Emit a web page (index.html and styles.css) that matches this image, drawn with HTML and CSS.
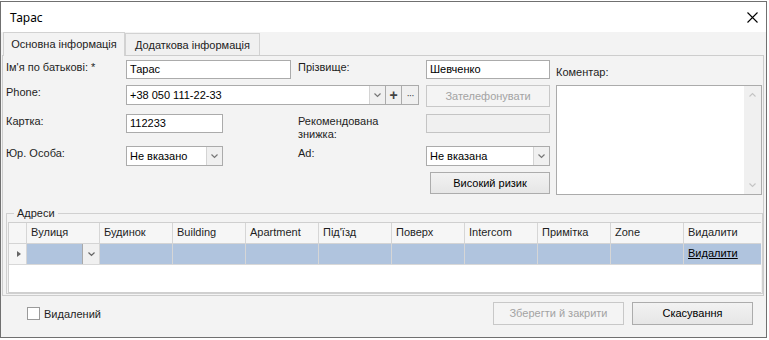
FILE: index.html
```html
<!DOCTYPE html>
<html lang="uk">
<head>
    <meta charset="UTF-8">
    <title>Тарас</title>
    <link rel="stylesheet" href="styles.css">
</head>
<body>
    <div class="dialog">
        <div class="titlebar">
            <span class="title">Тарас</span>
            <svg class="close" width="11" height="11" viewBox="0 0 11 11">
                <path d="M0.5 0.5 L10.5 10.5 M10.5 0.5 L0.5 10.5" stroke="#000" stroke-width="1.1" fill="none"/>
            </svg>
        </div>

        <div class="content">
            <div class="tabs">
                <div class="tab active">Основна інформація</div>
                <div class="tab">Додаткова інформація</div>
            </div>

            <div class="panel">
                <div class="form">
                    <label class="lbl">Ім'я по батькові: *</label>
                    <div class="input w165">Тарас</div>
                    <label class="lbl">Прізвище:</label>
                    <div class="input w124">Шевченко</div>
                    <div></div>
                    <label class="lbl comment-lbl">Коментар:</label>

                    <label class="lbl">Phone:</label>
                    <div class="phone">
                        <div class="combo w260">
                            <span class="combo-text">+38 050 111-22-33</span>
                            <span class="combo-btn"><svg width="7" height="5" viewBox="0 0 7 5"><path d="M0.5 0.5 L3.5 3.5 L6.5 0.5" stroke="#777" stroke-width="1.2" fill="none"/></svg></span>
                        </div>
                        <span class="mini-btn plus">+</span>
                        <span class="mini-btn dots">···</span>
                    </div>
                    <div class="btn disabled w124">Зателефонувати</div>
                    <div></div>
                    <div class="memo">
                        <div class="memo-text"></div>
                        <div class="scroll">
                            <svg width="7" height="5" viewBox="0 0 7 5"><path d="M0.5 4.5 L3.5 1.5 L6.5 4.5" stroke="#c4c4c4" stroke-width="1.1" fill="none"/></svg>
                            <svg width="7" height="5" viewBox="0 0 7 5"><path d="M0.5 0.5 L3.5 3.5 L6.5 0.5" stroke="#c4c4c4" stroke-width="1.1" fill="none"/></svg>
                        </div>
                    </div>

                    <label class="lbl">Картка:</label>
                    <div class="input w97">112233</div>
                    <label class="lbl">Рекомендована<br>знижка:</label>
                    <div class="input disabled w124"></div>
                    <div></div>

                    <label class="lbl">Юр. Особа:</label>
                    <div class="combo w97">
                        <span class="combo-text">Не вказано</span>
                        <span class="combo-btn"><svg width="7" height="5" viewBox="0 0 7 5"><path d="M0.5 0.5 L3.5 3.5 L6.5 0.5" stroke="#777" stroke-width="1.2" fill="none"/></svg></span>
                    </div>
                    <label class="lbl">Ad:</label>
                    <div class="combo w124">
                        <span class="combo-text">Не вказана</span>
                        <span class="combo-btn"><svg width="7" height="5" viewBox="0 0 7 5"><path d="M0.5 0.5 L3.5 3.5 L6.5 0.5" stroke="#777" stroke-width="1.2" fill="none"/></svg></span>
                    </div>
                    <div></div>

                    <div class="risk-cell">
                        <div class="btn w120">Високий ризик</div>
                    </div>
                </div>

                <fieldset class="group">
                    <legend>Адреси</legend>
                    <div class="grid">
                        <div class="grid-row head">
                            <div class="cell rowhead"></div>
                            <div class="cell">Вулиця</div>
                            <div class="cell">Будинок</div>
                            <div class="cell">Building</div>
                            <div class="cell">Apartment</div>
                            <div class="cell">Під'їзд</div>
                            <div class="cell">Поверх</div>
                            <div class="cell">Intercom</div>
                            <div class="cell">Примітка</div>
                            <div class="cell">Zone</div>
                            <div class="cell last">Видалити</div>
                        </div>
                        <div class="grid-row data">
                            <div class="cell rowhead"><span class="arrow"></span></div>
                            <div class="cell street">
                                <span class="cell-btn"><svg width="7" height="5" viewBox="0 0 7 5"><path d="M0.5 0.5 L3.5 3.5 L6.5 0.5" stroke="#666" stroke-width="1.2" fill="none"/></svg></span>
                            </div>
                            <div class="cell"></div>
                            <div class="cell"></div>
                            <div class="cell"></div>
                            <div class="cell"></div>
                            <div class="cell"></div>
                            <div class="cell"></div>
                            <div class="cell"></div>
                            <div class="cell"></div>
                            <div class="cell last"><a class="link">Видалити</a></div>
                        </div>
                    </div>
                </fieldset>
            </div>

            <div class="footer">
                <label class="check"><span class="box"></span>Видалений</label>
                <div class="spacer"></div>
                <div class="btn disabled save">Зберегти й закрити</div>
                <div class="btn cancel">Скасування</div>
            </div>
        </div>
    </div>
</body>
</html>
```

FILE: styles.css
```css
body {
    margin: 0;
    background: #fff;
    font-family: 'Liberation Sans', Arial, sans-serif;
    font-size: 11px;
    color: #1e1e1e;
}

.dialog {
    width: 767px;
    height: 337px;
    margin-top: 1px;
    box-sizing: border-box;
    border: 1px solid #707070;
    display: flex;
    flex-direction: column;
    background: #f3f3f3;
}

.titlebar {
    height: 30px;
    flex: none;
    background: #fff;
    display: flex;
    align-items: center;
    justify-content: space-between;
    padding: 0 8px 0 9px;
}

.title {
    font-family: 'Noto Sans', sans-serif;
    font-size: 12px;
    color: #000;
}

.content {
    flex: 1;
    display: flex;
    flex-direction: column;
}

.tabs {
    display: flex;
    align-items: flex-end;
    height: 23px;
    padding-left: 2px;
}

.tab {
    box-sizing: border-box;
    height: 22px;
    width: 135px;
    border: 1px solid #d2d2d2;
    border-bottom: none;
    background: #f0f0f0;
    text-align: center;
    line-height: 22px;
    color: #222;
}

.tab.active {
    width: 122px;
    height: 24px;
    margin-bottom: -1px;
    background: #f3f3f3;
    line-height: 22px;
    position: relative;
    z-index: 1;
}

.panel {
    box-sizing: border-box;
    height: 241px;
    width: 762px;
    margin-left: 1px;
    border: 1px solid #cdcdcd;
    padding: 4px 0 0 3px;
}

.form {
    display: grid;
    grid-template-columns: 120px 172px 128px 124px 6px 206px;
    grid-template-rows: 25px 29px 32px 26px 22px;
}

.lbl {
    padding-top: 1px;
    line-height: 13px;
}

.comment-lbl {
    padding-top: 6px;
}

.input {
    box-sizing: border-box;
    height: 19px;
    border: 1px solid #ababab;
    background: #fff;
    padding-left: 3px;
    line-height: 17px;
    color: #000;
}

.input.disabled {
    background: #f0f0f0;
    border-color: #c4c4c4;
}

.w165 { width: 165px; }
.w124 { width: 124px; }
.w120 { width: 120px; }
.w97 { width: 97px; }
.w260 { width: 260px; }

.combo {
    box-sizing: border-box;
    height: 20px;
    border: 1px solid #ababab;
    background: #fff;
    display: flex;
    color: #000;
}

.combo-text {
    flex: 1;
    padding-left: 3px;
    line-height: 18px;
}

.combo-btn {
    width: 15px;
    border-left: 1px solid #d4d4d4;
    background: #f0f0f0;
    display: flex;
    align-items: center;
    justify-content: center;
}

.phone {
    grid-column: span 2;
    display: flex;
    height: 20px;
}

.mini-btn {
    box-sizing: border-box;
    height: 20px;
    border: 1px solid #ababab;
    border-left: none;
    background: #f0f0f0;
    display: flex;
    align-items: center;
    justify-content: center;
    color: #444;
}

.plus {
    width: 16px;
    font-weight: bold;
    font-size: 14px;
}

.dots {
    width: 17px;
    font-size: 10px;
    letter-spacing: -1px;
}

.btn {
    box-sizing: border-box;
    height: 22px;
    border: 1px solid #acacac;
    background: linear-gradient(#f2f2f2, #e6e6e6);
    text-align: center;
    line-height: 20px;
    color: #000;
}

.btn.disabled {
    background: #f4f4f4;
    border-color: #c8c8c8;
    color: #a3a3a3;
}

.memo {
    grid-row: 2 / span 4;
    grid-column: 6;
    box-sizing: border-box;
    width: 206px;
    height: 110px;
    border: 1px solid #ababab;
    background: #fff;
    display: flex;
}

.memo-text {
    flex: 1;
}

.scroll {
    width: 17px;
    background: #f0f0f0;
    display: flex;
    flex-direction: column;
    align-items: center;
    justify-content: space-between;
    padding: 6px 0 6px;
}

.risk-cell {
    grid-row: 5;
    grid-column: 4;
    padding-left: 4px;
}

.group {
    margin: 12px 0 0 0;
    padding: 0 1px 1px 1px;
    width: 757px;
    box-sizing: border-box;
    height: 88px;
    border: 1px solid #d0d0d0;
}

.group legend {
    margin-left: 6px;
    padding: 0 3px;
    line-height: 14px;
}

.grid {
    margin-top: 2px;
    height: 69px;
    border: 1px solid #cfcfcf;
    border-right: none;
    background: #fff;
}

.grid-row {
    display: flex;
}

.grid-row.head {
    height: 20px;
    background: #f6f6f6;
    border-bottom: 1px solid #d4d4d4;
}

.grid-row.data {
    height: 20px;
    background: #b0c4de;
    border-bottom: 1px solid #d8d8d8;
}

.cell {
    box-sizing: border-box;
    width: 73px;
    border-right: 1px solid #d6d6d6;
    padding-left: 4px;
    line-height: 19px;
}

.cell.last {
    width: 77px;
    border-right: none;
}

.cell.rowhead {
    width: 18px;
    background: #f6f6f6;
    display: flex;
    align-items: center;
}

.arrow {
    width: 0;
    height: 0;
    margin-left: 4px;
    border-top: 3px solid transparent;
    border-bottom: 3px solid transparent;
    border-left: 4px solid #666;
}

.cell.street {
    display: flex;
    justify-content: flex-end;
    padding: 0;
}

.cell-btn {
    width: 16px;
    border-left: 1px solid #a9a9a9;
    background: #f0f0f0;
    display: flex;
    align-items: center;
    justify-content: center;
}

.link {
    color: #000;
    text-decoration: underline;
}

.footer {
    flex: 1;
    display: flex;
    align-items: flex-start;
    padding: 6px 13px 0 26px;
}

.check {
    display: flex;
    align-items: center;
    margin-top: 5px;
}

.box {
    box-sizing: border-box;
    width: 13px;
    height: 13px;
    border: 1px solid #9a9a9a;
    background: #fff;
    margin-right: 4px;
}

.spacer {
    flex: 1;
}

.save {
    width: 131px;
    height: 23px;
    line-height: 21px;
    margin-right: 8px;
}

.cancel {
    width: 121px;
    height: 23px;
    line-height: 21px;
}
```
